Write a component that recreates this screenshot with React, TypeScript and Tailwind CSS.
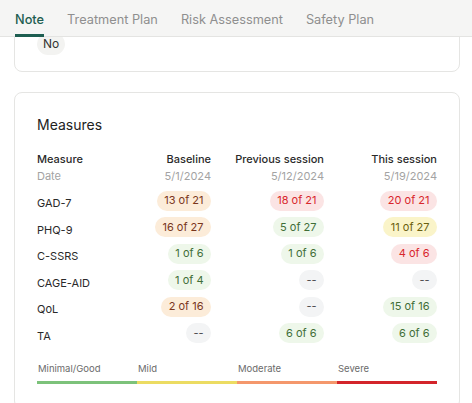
import React from 'react';

type Tone = 'orange' | 'red' | 'green' | 'yellow' | 'none';

interface Score {
  value: string;
  tone: Tone;
}

interface MeasureRow {
  name: string;
  baseline: Score;
  previous: Score;
  current: Score;
}

const toneClasses: Record<Tone, string> = {
  orange: 'bg-[#fcecd9] text-[#7a361c]',
  red: 'bg-[#fbe4e4] text-[#d8262c]',
  green: 'bg-[#eef7ea] text-[#3f6e38]',
  yellow: 'bg-[#faf4c9] text-[#6a5f10]',
  none: 'bg-[#f3f4f5] text-[#4b4b4b]',
};

const tabs = ['Note', 'Treatment Plan', 'Risk Assessment', 'Safety Plan'];

const rows: MeasureRow[] = [
  { name: 'GAD-7', baseline: { value: '13 of 21', tone: 'orange' }, previous: { value: '18 of 21', tone: 'red' }, current: { value: '20 of 21', tone: 'red' } },
  { name: 'PHQ-9', baseline: { value: '16 of 27', tone: 'orange' }, previous: { value: '5 of 27', tone: 'green' }, current: { value: '11 of 27', tone: 'yellow' } },
  { name: 'C-SSRS', baseline: { value: '1 of 6', tone: 'green' }, previous: { value: '1 of 6', tone: 'green' }, current: { value: '4 of 6', tone: 'red' } },
  { name: 'CAGE-AID', baseline: { value: '1 of 4', tone: 'green' }, previous: { value: '--', tone: 'none' }, current: { value: '--', tone: 'none' } },
  { name: 'QoL', baseline: { value: '2 of 16', tone: 'orange' }, previous: { value: '--', tone: 'none' }, current: { value: '15 of 16', tone: 'green' } },
  { name: 'TA', baseline: { value: '--', tone: 'none' }, previous: { value: '6 of 6', tone: 'green' }, current: { value: '6 of 6', tone: 'green' } },
];

const severity = [
  { label: 'Minimal/Good', bar: 'bg-[#7cc27a]' },
  { label: 'Mild', bar: 'bg-[#ecdc62]' },
  { label: 'Moderate', bar: 'bg-[#f4976c]' },
  { label: 'Severe', bar: 'bg-[#d3242a]' },
];

function Pill({ score }: { score: Score }) {
  return (
    <div className="flex justify-end">
      <span className={`h-5 inline-flex items-center rounded-full px-[7.5px] text-[11px] leading-none ${toneClasses[score.tone]}`}>
        {score.value}
      </span>
    </div>
  );
}

export default function App() {
  return (
    <div className="h-[403px] w-[472px] overflow-hidden bg-white text-[#222] font-['Inter','Liberation_Sans',sans-serif] flex flex-col">
      {/* Tabs */}
      <div className="relative z-10 h-[37px] shrink-0 bg-[#f5f5f4] border-b border-[#e4e4e2] flex items-end gap-[23px] px-[15px]">
        {tabs.map((tab, i) => (
          <div
            key={tab}
            className={`h-full flex items-center text-[12.75px] border-b-[3px] -mb-px pt-[4px] ${
              i === 0 ? 'text-[#1e5e51] font-medium border-[#1e5e51]' : 'text-[#8f8f8f] border-transparent'
            }`}
          >
            {tab}
          </div>
        ))}
      </div>

      <div className="flex-1 overflow-hidden pl-[14px] pr-[12px]">
        {/* Previous section, scrolled up */}
        <div className="-mt-[30px] rounded-lg border border-[#e5e5e3] px-[22px] pt-[22px] pb-[16px]">
          <span className="inline-flex h-[22px] items-center rounded-full bg-[#f3f3f1] px-[6px] text-[12px] text-[#333]">No</span>
        </div>

        {/* Measures */}
        <div className="mt-[20px] rounded-lg border border-[#e5e5e3] px-[22px] pt-[22px] pb-[24px]">
          <h2 className="text-[14px] leading-5 text-[#222]">Measures</h2>

          <div className="mt-[15.5px] grid grid-cols-[61px_1fr_1fr_1fr] text-[11px] leading-[17px]">
            <div className="font-medium text-[#2a2a2a]">Measure</div>
            <div className="font-medium text-[#2a2a2a] text-right">Baseline</div>
            <div className="font-medium text-[#2a2a2a] text-right">Previous session</div>
            <div className="font-medium text-[#2a2a2a] text-right">This session</div>
            <div className="text-[#a3a3a3]">Date</div>
            <div className="text-right text-[#a3a3a3]">5/1/2024</div>
            <div className="text-right text-[#a3a3a3]">5/12/2024</div>
            <div className="text-right text-[#a3a3a3]">5/19/2024</div>
          </div>

          <div className="mt-[6px] flex flex-col gap-[6.5px]">
            {rows.map(row => (
              <div key={row.name} className="h-5 grid grid-cols-[61px_1fr_1fr_1fr] items-center">
                <div className="text-[11px] leading-none text-[#2a2a2a] translate-y-[2.5px] whitespace-nowrap">{row.name}</div>
                <Pill score={row.baseline} />
                <Pill score={row.previous} />
                <Pill score={row.current} />
              </div>
            ))}
          </div>

          {/* Severity legend */}
          <div className="mt-[20px] grid grid-cols-4">
            {severity.map(s => (
              <div key={s.label}>
                <div className="text-[9.5px] leading-[12px] text-[#6b6b6b] pl-px">{s.label}</div>
                <div className={`mt-[5.5px] h-[3px] ${s.bar}`} />
              </div>
            ))}
          </div>
        </div>
      </div>
    </div>
  );
}
